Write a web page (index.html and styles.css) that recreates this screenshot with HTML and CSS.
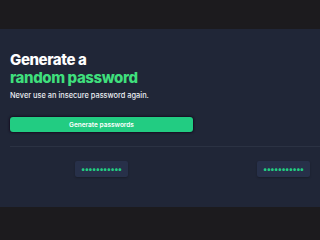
FILE: index.html
```html
<!DOCTYPE html>
<html lang="en">
<head>
	<meta charset="UTF-8">
	<title>Password generator</title>
	<link rel="stylesheet" href="styles.css">
</head>
<body>
	<div class="topbar"></div>
	<div class="panel">
		<h1 class="title">Generate a<br><span class="accent">random password</span></h1>
		<p class="subtitle">Never use an insecure password again.</p>
		<button class="generate">Generate passwords</button>
		<div class="divider"></div>
		<div class="results">
			<div class="result"><span class="pass">&bull;&bull;&bull;&bull;&bull;&bull;&bull;&bull;&bull;&bull;&bull;</span></div>
			<div class="result"><span class="pass">&bull;&bull;&bull;&bull;&bull;&bull;&bull;&bull;&bull;&bull;&bull;</span></div>
		</div>
	</div>
</body>
</html>
```

FILE: styles.css
```css
html,body{
	margin: 0;
	padding: 0;
	width: 320px;
	height: 240px;
	overflow: hidden;
	background: #1c1b1e;
	font-family: Inter, "Noto Sans", sans-serif;
}
.topbar{
	height: 29px;
}
.panel{
	height: 178px;
	background: #202637;
	padding: 22px 0 0 10px;
	box-sizing: border-box;
}
.title{
	margin: 0;
	font-size: 15px;
	line-height: 18px;
	font-weight: 800;
	color: #ffffff;
	letter-spacing: -0.4px;
}
.accent{
	color: #3fdf7c;
}
.subtitle{
	margin: 4px 0 0 0;
	font-size: 7.4px;
	line-height: 10px;
	font-weight: 500;
	color: #eceef3;
}
.generate{
	display: block;
	margin-top: 16px;
	width: 183px;
	height: 15px;
	border: none;
	border-radius: 3px;
	background: #22cc82;
	color: #ffffff;
	font-family: Inter, sans-serif;
	font-size: 6.5px;
	font-weight: 600;
	box-shadow: 0 0 2px 1px rgba(20,10,30,.8);
	padding: 0;
}
.divider{
	margin-top: 14px;
	height: 1px;
	background: #2b3243;
}
.results{
	display: grid;
	grid-template-columns: 182px 182px;
	margin-top: 14px;
}
.result{
	display: flex;
	justify-content: center;
}
.pass{
	display: block;
	width: 53px;
	height: 16px;
	line-height: 16px;
	background: #273049;
	border-radius: 2px;
	color: #22cc82;
	font-size: 8.5px;
	letter-spacing: -1.1px;
	text-align: center;
	box-shadow: 0 1px 2px rgba(0,0,0,.25);
}
```
